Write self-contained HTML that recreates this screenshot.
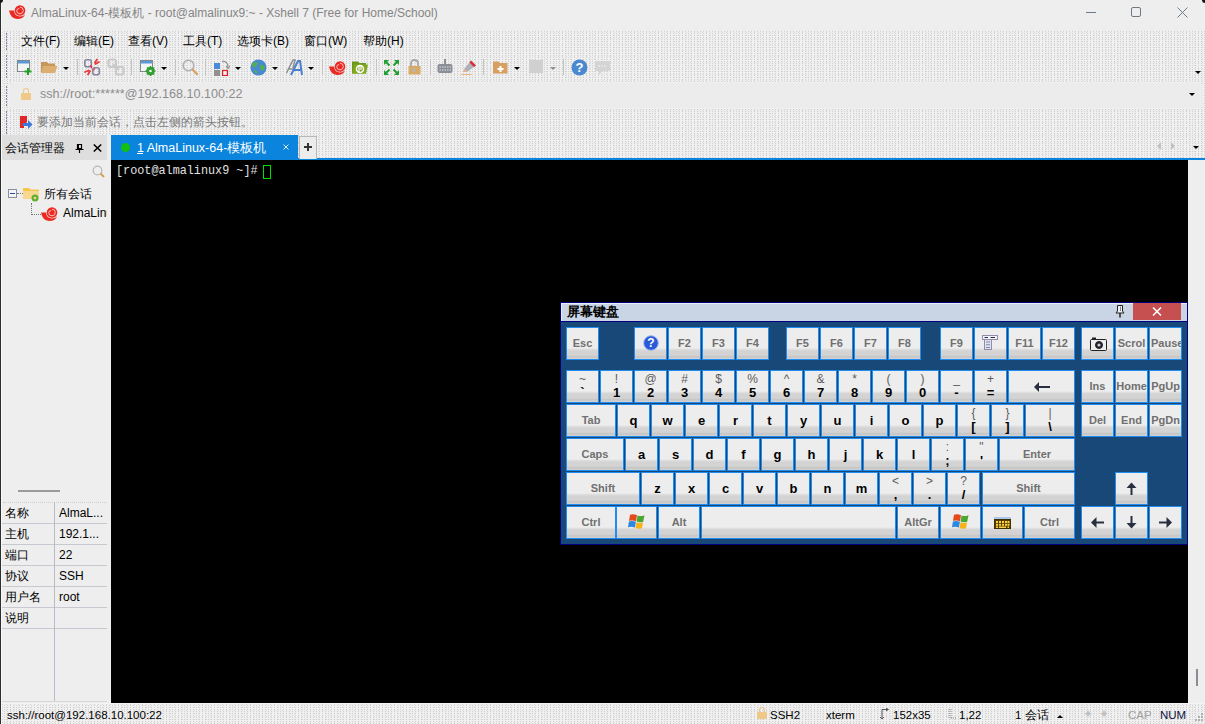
<!DOCTYPE html><html><head><meta charset="utf-8"><style>
*{margin:0;padding:0;box-sizing:border-box}
html,body{width:1205px;height:724px;overflow:hidden;background:#eeeeee;font-family:"Liberation Sans",sans-serif;font-size:12px;color:#000}
.a{position:absolute}
.t{position:absolute;white-space:nowrap;line-height:1}
.dith{background-color:#f0f0f0;background-image:conic-gradient(from 0deg at 1px 1px,transparent 75%,#d0d0d0 0),conic-gradient(from 0deg at 1px 1px,transparent 75%,#d6d6d6 0);background-size:3px 2px,4px 3px;background-position:0 0,1px 1px}
.sep{position:absolute;width:1px;background:#c4c4c4}
.dd{position:absolute;width:0;height:0;border-left:3px solid transparent;border-right:3px solid transparent;border-top:3px solid #000}
.key{position:absolute;border:1px solid #1e8cf0;background:linear-gradient(#ededed 0,#ededed 65%,#dedede 69%,#d3d3d3 75%,#d3d3d3 88%,#c6c6c6 91%,#cbcbcb 97%,#d6d6d6 100%)}
.kl{position:absolute;left:0;right:0;text-align:center;white-space:nowrap;line-height:1}
.fk{font-weight:bold;color:#707070;font-size:11px}
.lk{font-weight:bold;color:#000;font-size:13px}
.sy{color:#5c5c5c;font-size:12px}
</style></head><body>
<div class="a" style="left:0;top:0;width:1px;height:724px;background:#2a3030"></div>
<div class="a" style="left:0;top:0;width:3px;height:3px;background:#101818;border-bottom-right-radius:3px"></div>
<div class="a" style="left:1202px;top:0;width:3px;height:3px;background:#101818;border-bottom-left-radius:3px"></div>
<svg class="a" style="left:9px;top:4px" width="17" height="15" viewBox="0 0 17 15"><circle cx="11" cy="6.5" r="5.3" fill="#ec2a22"/><path d="M0 6.5 H5 Q5.6 12.4 11 12.4 Q15 12.4 16.2 9.5 Q15 15 8 15 Q1.5 14.5 0 6.5 Z" fill="#ec2a22"/><path d="M11 3.2 A3.3 3.3 0 1 1 7.7 6.5 A2.4 2.4 0 0 1 10.2 4.6" fill="none" stroke="#f6d0d0" stroke-width="0.9"/></svg>
<div class="t" style="left:31px;top:7px;color:#858585;font-size:12px">AlmaLinux-64-模板机 - root@almalinux9:~ - Xshell 7 (Free for Home/School)</div>
<div class="a" style="left:1086px;top:12px;width:10px;height:1px;background:#6d7b88"></div>
<div class="a" style="left:1131px;top:7px;width:10px;height:10px;border:1px solid #6d7b88;border-radius:2px"></div>
<svg class="a" style="left:1177px;top:7px" width="11" height="11"><path d="M0.5 0.5 L10.5 10.5 M10.5 0.5 L0.5 10.5" stroke="#6d7b88" stroke-width="1"/></svg>
<div class="a dith" style="left:1px;top:31px;width:1204px;height:104px"></div>
<div class="a" style="left:6px;top:33px;width:1px;height:2px;background:#8a80a0"></div>
<div class="a" style="left:6px;top:36px;width:1px;height:2px;background:#8a80a0"></div>
<div class="a" style="left:6px;top:39px;width:1px;height:2px;background:#8a80a0"></div>
<div class="a" style="left:6px;top:42px;width:1px;height:2px;background:#8a80a0"></div>
<div class="a" style="left:6px;top:45px;width:1px;height:2px;background:#8a80a0"></div>
<div class="a" style="left:6px;top:48px;width:1px;height:2px;background:#8a80a0"></div>
<div class="a" style="left:6px;top:55px;width:1px;height:2px;background:#8a80a0"></div>
<div class="a" style="left:6px;top:58px;width:1px;height:2px;background:#8a80a0"></div>
<div class="a" style="left:6px;top:61px;width:1px;height:2px;background:#8a80a0"></div>
<div class="a" style="left:6px;top:64px;width:1px;height:2px;background:#8a80a0"></div>
<div class="a" style="left:6px;top:67px;width:1px;height:2px;background:#8a80a0"></div>
<div class="a" style="left:6px;top:70px;width:1px;height:2px;background:#8a80a0"></div>
<div class="a" style="left:6px;top:73px;width:1px;height:2px;background:#8a80a0"></div>
<div class="a" style="left:6px;top:76px;width:1px;height:2px;background:#8a80a0"></div>
<div class="a" style="left:6px;top:86px;width:1px;height:2px;background:#8a80a0"></div>
<div class="a" style="left:6px;top:89px;width:1px;height:2px;background:#8a80a0"></div>
<div class="a" style="left:6px;top:92px;width:1px;height:2px;background:#8a80a0"></div>
<div class="a" style="left:6px;top:95px;width:1px;height:2px;background:#8a80a0"></div>
<div class="a" style="left:6px;top:98px;width:1px;height:2px;background:#8a80a0"></div>
<div class="a" style="left:6px;top:101px;width:1px;height:2px;background:#8a80a0"></div>
<div class="a" style="left:6px;top:104px;width:1px;height:2px;background:#8a80a0"></div>
<div class="a" style="left:6px;top:111px;width:1px;height:2px;background:#8a80a0"></div>
<div class="a" style="left:6px;top:114px;width:1px;height:2px;background:#8a80a0"></div>
<div class="a" style="left:6px;top:117px;width:1px;height:2px;background:#8a80a0"></div>
<div class="a" style="left:6px;top:120px;width:1px;height:2px;background:#8a80a0"></div>
<div class="a" style="left:6px;top:123px;width:1px;height:2px;background:#8a80a0"></div>
<div class="a" style="left:6px;top:126px;width:1px;height:2px;background:#8a80a0"></div>
<div class="a" style="left:6px;top:129px;width:1px;height:2px;background:#8a80a0"></div>
<div class="a" style="left:6px;top:132px;width:1px;height:2px;background:#8a80a0"></div>
<div class="t" style="left:21px;top:35px;font-size:12px;color:#000">文件(F)</div>
<div class="t" style="left:74px;top:35px;font-size:12px;color:#000">编辑(E)</div>
<div class="t" style="left:128px;top:35px;font-size:12px;color:#000">查看(V)</div>
<div class="t" style="left:183px;top:35px;font-size:12px;color:#000">工具(T)</div>
<div class="t" style="left:237px;top:35px;font-size:12px;color:#000">选项卡(B)</div>
<div class="t" style="left:304px;top:35px;font-size:12px;color:#000">窗口(W)</div>
<div class="t" style="left:363px;top:35px;font-size:12px;color:#000">帮助(H)</div>
<div class="a" style="left:10px;top:83px;width:1193px;height:25px;background:#ececec;border-radius:3px"></div>
<div class="a" style="left:21px;top:93px;width:10px;height:7px;background:#f0c888;border-radius:1px"></div>
<div class="a" style="left:23px;top:88px;width:6px;height:7px;border:1.5px solid #f0c888;border-bottom:none;border-radius:3px 3px 0 0"></div>
<div class="t" style="left:40px;top:88px;font-size:12.6px;color:#8c8c8c">ssh://root:******@192.168.10.100:22</div>
<div class="dd" style="left:1189px;top:93px"></div>
<div class="dd" style="left:1195px;top:71px"></div>
<svg class="a" style="left:20px;top:116px" width="13" height="13"><path d="M0 0 H7 V6 L4 9 V12 L0 12 Z" fill="#e02828"/><path d="M3 7 L8 7 L8 4 L12.5 8.5 L8 13 L8 10 L3 10 Z" fill="#3a7ad8"/></svg>
<div class="t" style="left:37px;top:116px;font-size:11.6px;color:#7a7a7a">要添加当前会话，点击左侧的箭头按钮。</div>
<div class="a dith" style="left:1px;top:135px;width:1204px;height:25px"></div>
<div class="a" style="left:1px;top:135px;width:106px;height:25px;background:#dedede"></div>
<div class="a" style="left:107px;top:135px;width:4px;height:568px;background:#eeeeee"></div>
<div class="t" style="left:5px;top:142px;font-size:12px;color:#000">会话管理器</div>
<svg class="a" style="left:75px;top:144px" width="9" height="9"><path d="M2.5 0.5 H6.5 V4.5 H2.5 Z M0.5 5.5 H8.5 M4.5 5.5 V9" stroke="#000" stroke-width="1.2" fill="none"/><path d="M3 1 H4 V4 H3Z" fill="#000"/></svg>
<svg class="a" style="left:93px;top:144px" width="9" height="8"><path d="M0.8 0.5 L8.2 7.5 M8.2 0.5 L0.8 7.5" stroke="#000" stroke-width="1.5"/></svg>
<div class="a" style="left:111px;top:135px;width:187px;height:25px;background:#0a84dc"></div>
<div class="a" style="left:111px;top:158px;width:1094px;height:2px;background:#0a84dc"></div>
<div class="a" style="left:121px;top:143px;width:9px;height:9px;border-radius:50%;background:#11c011"></div>
<div class="t" style="left:137px;top:142px;font-size:12.5px;color:#fff">1 AlmaLinux-64-模板机</div>
<div class="a" style="left:137px;top:153px;width:6px;height:1px;background:#fff"></div>
<svg class="a" style="left:283px;top:144px" width="6" height="6"><path d="M0.5 0.5 L5.5 5.5 M5.5 0.5 L0.5 5.5" stroke="#d8ecfa" stroke-width="1"/></svg>
<div class="a" style="left:299px;top:136px;width:18px;height:23px;background:#ececec;border:1px solid #b8b8b8;border-bottom:none"></div>
<div class="a" style="left:304px;top:146px;width:8px;height:2px;background:#333"></div>
<div class="a" style="left:307px;top:143px;width:2px;height:8px;background:#333"></div>
<div class="a" style="left:1157px;top:142px;width:0;height:0;border-top:4px solid transparent;border-bottom:4px solid transparent;border-right:4px solid #c0c0c0"></div>
<div class="a" style="left:1171px;top:142px;width:0;height:0;border-top:4px solid transparent;border-bottom:4px solid transparent;border-left:4px solid #c0c0c0"></div>
<div class="dd" style="left:1193px;top:146px"></div>
<div class="a" style="left:1px;top:160px;width:106px;height:543px;background:#eeeeee"></div>
<svg class="a" style="left:92px;top:165px" width="13" height="14"><circle cx="5.5" cy="5.5" r="4.3" fill="none" stroke="#b8b8b8" stroke-width="1.3"/><path d="M8.5 8.5 L12 12" stroke="#d8a050" stroke-width="2"/></svg>
<div class="a" style="left:8px;top:189px;width:9px;height:9px;border:1px solid #8a8ea0;background:#f4f4f4"></div>
<div class="a" style="left:10px;top:193px;width:5px;height:1px;background:#2050a0"></div>
<div class="a" style="left:17px;top:193px;width:6px;height:0;border-top:1px dotted #777"></div>
<svg class="a" style="left:23px;top:186px" width="17" height="16"><path d="M0 2 H6 L7.5 3.5 H16 V13 H0 Z" fill="#f6c64a"/><path d="M0 5 H16 V13 H0 Z" fill="#f8d890"/><circle cx="12" cy="12" r="3.5" fill="#60b030"/><circle cx="12" cy="12" r="1.3" fill="#f8d890"/></svg>
<div class="t" style="left:44px;top:188px;font-size:12px;color:#000">所有会话</div>
<div class="a" style="left:31px;top:203px;width:0;height:12px;border-left:1px dotted #777"></div>
<div class="a" style="left:31px;top:214px;width:10px;height:0;border-top:1px dotted #777"></div>
<svg class="a" style="left:41px;top:206px" width="17" height="15" viewBox="0 0 17 15"><circle cx="11" cy="6.5" r="5.3" fill="#ec2a22"/><path d="M0 6.5 H5 Q5.6 12.4 11 12.4 Q15 12.4 16.2 9.5 Q15 15 8 15 Q1.5 14.5 0 6.5 Z" fill="#ec2a22"/><path d="M11 3.2 A3.3 3.3 0 1 1 7.7 6.5 A2.4 2.4 0 0 1 10.2 4.6" fill="none" stroke="#f6d0d0" stroke-width="0.9"/></svg>
<div class="t" style="left:63px;top:207px;font-size:12px;color:#000;width:44px;overflow:hidden">AlmaLinux</div>
<div class="a" style="left:18px;top:490px;width:42px;height:2px;background:#9a9a9a"></div>
<div class="a" style="left:3px;top:502px;width:104px;height:0;border-top:1px dotted #cfcfcf"></div>
<div class="t" style="left:5px;top:507px;font-size:12px;color:#000">名称</div>
<div class="t" style="left:59px;top:507px;font-size:12px;color:#000">AlmaL...</div>
<div class="a" style="left:1px;top:523px;width:106px;height:1px;background:#c8c8d0"></div>
<div class="t" style="left:5px;top:528px;font-size:12px;color:#000">主机</div>
<div class="t" style="left:59px;top:528px;font-size:12px;color:#000">192.1...</div>
<div class="a" style="left:1px;top:544px;width:106px;height:1px;background:#c8c8d0"></div>
<div class="t" style="left:5px;top:549px;font-size:12px;color:#000">端口</div>
<div class="t" style="left:59px;top:549px;font-size:12px;color:#000">22</div>
<div class="a" style="left:1px;top:565px;width:106px;height:1px;background:#c8c8d0"></div>
<div class="t" style="left:5px;top:570px;font-size:12px;color:#000">协议</div>
<div class="t" style="left:59px;top:570px;font-size:12px;color:#000">SSH</div>
<div class="a" style="left:1px;top:586px;width:106px;height:1px;background:#c8c8d0"></div>
<div class="t" style="left:5px;top:591px;font-size:12px;color:#000">用户名</div>
<div class="t" style="left:59px;top:591px;font-size:12px;color:#000">root</div>
<div class="a" style="left:1px;top:607px;width:106px;height:1px;background:#c8c8d0"></div>
<div class="t" style="left:5px;top:612px;font-size:12px;color:#000">说明</div>
<div class="t" style="left:59px;top:612px;font-size:12px;color:#000"></div>
<div class="a" style="left:1px;top:628px;width:106px;height:1px;background:#c8c8d0"></div>
<div class="a" style="left:54px;top:502px;width:1px;height:200px;background:#b8bcc8"></div>
<div class="a" style="left:1px;top:701px;width:106px;height:1px;background:#d8d8d8"></div>
<div class="a" style="left:111px;top:160px;width:1077px;height:543px;background:#000"></div>
<div class="t" style="left:116px;top:165px;font-family:'Liberation Mono',monospace;font-size:11.8px;color:#e0e0e0;transform:scaleY(1.12);transform-origin:0 0">[root@almalinux9 ~]#</div>
<div class="a" style="left:263px;top:165px;width:8px;height:14px;border:1px solid #00e000"></div>
<div class="a" style="left:1188px;top:160px;width:17px;height:543px;background:#eeeeee"></div>
<div class="a" style="left:1196px;top:669px;width:2px;height:17px;background:#8c8c94"></div>
<div class="a dith" style="left:1px;top:703px;width:1204px;height:21px"></div>
<div class="a" style="left:1px;top:703px;width:1204px;height:1px;background:#f4f4f4"></div>
<div class="t" style="left:7px;top:710px;font-size:11.5px;color:#000">ssh://root@192.168.10.100:22</div>
<div class="a" style="left:757px;top:712px;width:10px;height:7px;background:#f0c888;border-radius:1px"></div>
<div class="a" style="left:759px;top:707px;width:6px;height:7px;border:1.5px solid #f0c888;border-bottom:none;border-radius:3px 3px 0 0"></div>
<div class="t" style="left:770px;top:710px;font-size:11.5px">SSH2</div>
<div class="t" style="left:826px;top:710px;font-size:11.5px">xterm</div>
<svg class="a" style="left:880px;top:708px" width="10" height="11"><path d="M2 11 V1.5 H8 M6 0 L8.5 1.5 L6 3 M0 9 L2 11 L4 9" stroke="#555" stroke-width="1" fill="none"/></svg>
<div class="t" style="left:893px;top:710px;font-size:11.5px">152x35</div>
<svg class="a" style="left:948px;top:709px" width="8" height="10"><path d="M1 0 V9 M3 0 V9 M3 9 H8" stroke="#888" stroke-width="1" stroke-dasharray="1 1" fill="none"/></svg>
<div class="t" style="left:959px;top:710px;font-size:11.5px">1,22</div>
<div class="t" style="left:1015px;top:710px;font-size:11.5px">1 会话</div>
<div class="a" style="left:1057px;top:715px;width:0;height:0;border-left:3px solid transparent;border-right:3px solid transparent;border-bottom:3px solid #000"></div>
<div class="t" style="left:1083px;top:708px;font-size:12px;color:#c0c0c0">✦</div>
<div class="t" style="left:1099px;top:708px;font-size:12px;color:#c0c0c0">✦</div>
<div class="t" style="left:1128px;top:710px;font-size:11.5px;color:#a0a0a0">CAP</div>
<div class="t" style="left:1160px;top:710px;font-size:11.5px;color:#101040">NUM</div>
<div class="a" style="left:560px;top:302px;width:628px;height:243px;background:#000080"></div>
<div class="a" style="left:561px;top:303px;width:626px;height:18px;background:#c9d5e5;border-top:1px solid #e8eef6;border-left:1px solid #e8eef6"></div>
<div class="a" style="left:561px;top:322px;width:626px;height:222px;background:#184878"></div>
<div class="t" style="left:567px;top:305px;font-size:13px;font-weight:bold;color:#000">屏幕键盘</div>
<div class="a" style="left:1133px;top:303px;width:48px;height:17px;background:#c65050"></div>
<svg class="a" style="left:1152px;top:307px" width="10" height="9"><path d="M1 0.5 L9 8.5 M9 0.5 L1 8.5" stroke="#fff" stroke-width="1.5"/></svg>
<svg class="a" style="left:1115px;top:305px" width="10" height="13"><path d="M3 0.5 H7.5 V6 L9 8 H1 L2.5 6 V0.5 Z" stroke="#222" stroke-width="1" fill="#f0f0f0"/><path d="M5 8 V12.5" stroke="#222" stroke-width="1.5"/><path d="M5.5 1.5 V6" stroke="#888" stroke-width="1"/></svg>
<div class="key" style="left:566px;top:327px;width:33px;height:33px"><div class="kl fk" style="top:10px">Esc</div></div>
<div class="key" style="left:634px;top:327px;width:33px;height:33px"><svg class="a" style="left:8px;top:7px" width="16" height="16"><circle cx="8" cy="8" r="7.3" fill="#2a5ad8" stroke="#9ab8f0" stroke-width="1"/><text x="8" y="12.3" text-anchor="middle" font-family="Liberation Sans" font-weight="bold" font-size="12" fill="#fff">?</text></svg></div>
<div class="key" style="left:668px;top:327px;width:33px;height:33px"><div class="kl fk" style="top:10px">F2</div></div>
<div class="key" style="left:702px;top:327px;width:33px;height:33px"><div class="kl fk" style="top:10px">F3</div></div>
<div class="key" style="left:736px;top:327px;width:33px;height:33px"><div class="kl fk" style="top:10px">F4</div></div>
<div class="key" style="left:786px;top:327px;width:33px;height:33px"><div class="kl fk" style="top:10px">F5</div></div>
<div class="key" style="left:820px;top:327px;width:33px;height:33px"><div class="kl fk" style="top:10px">F6</div></div>
<div class="key" style="left:854px;top:327px;width:33px;height:33px"><div class="kl fk" style="top:10px">F7</div></div>
<div class="key" style="left:888px;top:327px;width:33px;height:33px"><div class="kl fk" style="top:10px">F8</div></div>
<div class="key" style="left:940px;top:327px;width:33px;height:33px"><div class="kl fk" style="top:10px">F9</div></div>
<div class="key" style="left:974px;top:327px;width:33px;height:33px"><svg class="a" style="left:7px;top:7px" width="16" height="15"><rect x="0.5" y="0.5" width="15" height="4" fill="#f4f4fa" stroke="#9888a8"/><path d="M2.5 2.5 H6 M8.5 2.5 H13" stroke="#203050" stroke-width="1.2"/><rect x="2.5" y="4.5" width="7" height="10" fill="#dce4f2" stroke="#9888a8"/><path d="M4.5 7 H8 M4.5 9.8 H8 M4.5 12.5 H8" stroke="#203050" stroke-width="1.1" stroke-dasharray="1 1"/></svg></div>
<div class="key" style="left:1008px;top:327px;width:33px;height:33px"><div class="kl fk" style="top:10px">F11</div></div>
<div class="key" style="left:1042px;top:327px;width:33px;height:33px"><div class="kl fk" style="top:10px">F12</div></div>
<div class="key" style="left:1081px;top:327px;width:33px;height:33px"><svg class="a" style="left:8px;top:9px" width="17" height="14"><rect x="0.5" y="2.5" width="16" height="11" rx="1" fill="#eee" stroke="#222"/><rect x="2" y="0.5" width="4" height="2" fill="#222"/><circle cx="9" cy="8" r="3.5" fill="#223" stroke="#222"/><circle cx="9" cy="8" r="1.6" fill="#ccd"/></svg></div>
<div class="key" style="left:1115px;top:327px;width:33px;height:33px"><div class="kl fk" style="top:10px">Scrol</div></div>
<div class="key" style="left:1149px;top:327px;width:33px;height:33px"><div class="kl fk" style="top:10px;text-align:left;left:1px;overflow:hidden">Pause</div></div>
<div class="key" style="left:566px;top:370px;width:33px;height:33px"><div class="kl sy" style="top:1.5px">~</div><div class="kl lk" style="top:15px">`</div></div>
<div class="key" style="left:600px;top:370px;width:33px;height:33px"><div class="kl sy" style="top:1.5px">!</div><div class="kl lk" style="top:15px">1</div></div>
<div class="key" style="left:634px;top:370px;width:33px;height:33px"><div class="kl sy" style="top:1.5px">@</div><div class="kl lk" style="top:15px">2</div></div>
<div class="key" style="left:668px;top:370px;width:33px;height:33px"><div class="kl sy" style="top:1.5px">#</div><div class="kl lk" style="top:15px">3</div></div>
<div class="key" style="left:702px;top:370px;width:33px;height:33px"><div class="kl sy" style="top:1.5px">$</div><div class="kl lk" style="top:15px">4</div></div>
<div class="key" style="left:736px;top:370px;width:33px;height:33px"><div class="kl sy" style="top:1.5px">%</div><div class="kl lk" style="top:15px">5</div></div>
<div class="key" style="left:770px;top:370px;width:33px;height:33px"><div class="kl sy" style="top:1.5px">^</div><div class="kl lk" style="top:15px">6</div></div>
<div class="key" style="left:804px;top:370px;width:33px;height:33px"><div class="kl sy" style="top:1.5px">&amp;</div><div class="kl lk" style="top:15px">7</div></div>
<div class="key" style="left:838px;top:370px;width:33px;height:33px"><div class="kl sy" style="top:1.5px">*</div><div class="kl lk" style="top:15px">8</div></div>
<div class="key" style="left:872px;top:370px;width:33px;height:33px"><div class="kl sy" style="top:1.5px">(</div><div class="kl lk" style="top:15px">9</div></div>
<div class="key" style="left:906px;top:370px;width:33px;height:33px"><div class="kl sy" style="top:1.5px">)</div><div class="kl lk" style="top:15px">0</div></div>
<div class="key" style="left:940px;top:370px;width:33px;height:33px"><div class="kl sy" style="top:1.5px">_</div><div class="kl lk" style="top:15px">-</div></div>
<div class="key" style="left:974px;top:370px;width:33px;height:33px"><div class="kl sy" style="top:1.5px">+</div><div class="kl lk" style="top:15px">=</div></div>
<div class="key" style="left:1008px;top:370px;width:67px;height:33px"><svg class="a" style="left:25px;top:11px" width="17" height="10"><path d="M4 5 H16" stroke="#283040" stroke-width="2"/><path d="M0 5 L5 0 V10 Z" fill="#283040"/></svg></div>
<div class="key" style="left:1081px;top:370px;width:33px;height:33px"><div class="kl fk" style="top:10px">Ins</div></div>
<div class="key" style="left:1115px;top:370px;width:33px;height:33px"><div class="kl fk" style="top:10px">Home</div></div>
<div class="key" style="left:1149px;top:370px;width:33px;height:33px"><div class="kl fk" style="top:10px">PgUp</div></div>
<div class="key" style="left:566px;top:404px;width:50px;height:33px"><div class="kl fk" style="top:10px">Tab</div></div>
<div class="key" style="left:617px;top:404px;width:33px;height:33px"><div class="kl lk" style="top:9px">q</div></div>
<div class="key" style="left:651px;top:404px;width:33px;height:33px"><div class="kl lk" style="top:9px">w</div></div>
<div class="key" style="left:685px;top:404px;width:33px;height:33px"><div class="kl lk" style="top:9px">e</div></div>
<div class="key" style="left:719px;top:404px;width:33px;height:33px"><div class="kl lk" style="top:9px">r</div></div>
<div class="key" style="left:753px;top:404px;width:33px;height:33px"><div class="kl lk" style="top:9px">t</div></div>
<div class="key" style="left:787px;top:404px;width:33px;height:33px"><div class="kl lk" style="top:9px">y</div></div>
<div class="key" style="left:821px;top:404px;width:33px;height:33px"><div class="kl lk" style="top:9px">u</div></div>
<div class="key" style="left:855px;top:404px;width:33px;height:33px"><div class="kl lk" style="top:9px">i</div></div>
<div class="key" style="left:889px;top:404px;width:33px;height:33px"><div class="kl lk" style="top:9px">o</div></div>
<div class="key" style="left:923px;top:404px;width:33px;height:33px"><div class="kl lk" style="top:9px">p</div></div>
<div class="key" style="left:957px;top:404px;width:33px;height:33px"><div class="kl sy" style="top:1.5px">{</div><div class="kl lk" style="top:15px">[</div></div>
<div class="key" style="left:991px;top:404px;width:33px;height:33px"><div class="kl sy" style="top:1.5px">}</div><div class="kl lk" style="top:15px">]</div></div>
<div class="key" style="left:1025px;top:404px;width:50px;height:33px"><div class="kl sy" style="top:1.5px">|</div><div class="kl lk" style="top:15px">\</div></div>
<div class="key" style="left:1081px;top:404px;width:33px;height:33px"><div class="kl fk" style="top:10px">Del</div></div>
<div class="key" style="left:1115px;top:404px;width:33px;height:33px"><div class="kl fk" style="top:10px">End</div></div>
<div class="key" style="left:1149px;top:404px;width:33px;height:33px"><div class="kl fk" style="top:10px">PgDn</div></div>
<div class="key" style="left:566px;top:438px;width:58px;height:33px"><div class="kl fk" style="top:10px">Caps</div></div>
<div class="key" style="left:625px;top:438px;width:33px;height:33px"><div class="kl lk" style="top:9px">a</div></div>
<div class="key" style="left:659px;top:438px;width:33px;height:33px"><div class="kl lk" style="top:9px">s</div></div>
<div class="key" style="left:693px;top:438px;width:33px;height:33px"><div class="kl lk" style="top:9px">d</div></div>
<div class="key" style="left:727px;top:438px;width:33px;height:33px"><div class="kl lk" style="top:9px">f</div></div>
<div class="key" style="left:761px;top:438px;width:33px;height:33px"><div class="kl lk" style="top:9px">g</div></div>
<div class="key" style="left:795px;top:438px;width:33px;height:33px"><div class="kl lk" style="top:9px">h</div></div>
<div class="key" style="left:829px;top:438px;width:33px;height:33px"><div class="kl lk" style="top:9px">j</div></div>
<div class="key" style="left:863px;top:438px;width:33px;height:33px"><div class="kl lk" style="top:9px">k</div></div>
<div class="key" style="left:897px;top:438px;width:33px;height:33px"><div class="kl lk" style="top:9px">l</div></div>
<div class="key" style="left:931px;top:438px;width:33px;height:33px"><div class="kl sy" style="top:1.5px">:</div><div class="kl lk" style="top:15px">;</div></div>
<div class="key" style="left:965px;top:438px;width:33px;height:33px"><div class="kl sy" style="top:1.5px">"</div><div class="kl lk" style="top:15px">'</div></div>
<div class="key" style="left:999px;top:438px;width:76px;height:33px"><div class="kl fk" style="top:10px">Enter</div></div>
<div class="key" style="left:566px;top:472px;width:74px;height:33px"><div class="kl fk" style="top:10px">Shift</div></div>
<div class="key" style="left:641px;top:472px;width:33px;height:33px"><div class="kl lk" style="top:9px">z</div></div>
<div class="key" style="left:675px;top:472px;width:33px;height:33px"><div class="kl lk" style="top:9px">x</div></div>
<div class="key" style="left:709px;top:472px;width:33px;height:33px"><div class="kl lk" style="top:9px">c</div></div>
<div class="key" style="left:743px;top:472px;width:33px;height:33px"><div class="kl lk" style="top:9px">v</div></div>
<div class="key" style="left:777px;top:472px;width:33px;height:33px"><div class="kl lk" style="top:9px">b</div></div>
<div class="key" style="left:811px;top:472px;width:33px;height:33px"><div class="kl lk" style="top:9px">n</div></div>
<div class="key" style="left:845px;top:472px;width:33px;height:33px"><div class="kl lk" style="top:9px">m</div></div>
<div class="key" style="left:879px;top:472px;width:33px;height:33px"><div class="kl sy" style="top:1.5px">&lt;</div><div class="kl lk" style="top:15px">,</div></div>
<div class="key" style="left:913px;top:472px;width:33px;height:33px"><div class="kl sy" style="top:1.5px">&gt;</div><div class="kl lk" style="top:15px">.</div></div>
<div class="key" style="left:947px;top:472px;width:33px;height:33px"><div class="kl sy" style="top:1.5px">?</div><div class="kl lk" style="top:15px">/</div></div>
<div class="key" style="left:982px;top:472px;width:93px;height:33px"><div class="kl fk" style="top:10px">Shift</div></div>
<div class="key" style="left:1115px;top:472px;width:33px;height:33px"><svg class="a" style="left:10px;top:9px" width="11" height="13"><path d="M5.5 5 V13" stroke="#283040" stroke-width="2"/><path d="M0.5 6 L5.5 0.5 L10.5 6 Z" fill="#283040"/></svg></div>
<div class="key" style="left:566px;top:506px;width:50px;height:33px"><div class="kl fk" style="top:10px">Ctrl</div></div>
<div class="key" style="left:616px;top:506px;width:41px;height:33px"><svg class="a" style="left:11px;top:7px" width="17" height="15"><path d="M2 0.8 Q5.5 -0.3 9 1.2 L8 7.2 Q4.8 5.8 1 6.8 Z" fill="#e44a1c"/><path d="M9.6 1.6 Q12.8 2.8 16.5 1.2 L15.2 7.8 Q11.8 9 8.6 7.6 Z" fill="#4aa830"/><path d="M0.9 7.4 Q4.5 6.4 7.9 7.8 L6.9 13.6 Q3.6 12.2 0 13.2 Z" fill="#2a88e0"/><path d="M8.5 8.3 Q11.7 9.6 15.1 8.4 L14 14.2 Q10.6 15.4 7.5 14 Z" fill="#f6b418"/></svg></div>
<div class="key" style="left:658px;top:506px;width:42px;height:33px"><div class="kl fk" style="top:10px">Alt</div></div>
<div class="key" style="left:701px;top:506px;width:195px;height:33px"></div>
<div class="key" style="left:897px;top:506px;width:42px;height:33px"><div class="kl fk" style="top:10px">AltGr</div></div>
<div class="key" style="left:940px;top:506px;width:41px;height:33px"><svg class="a" style="left:11px;top:7px" width="17" height="15"><path d="M2 0.8 Q5.5 -0.3 9 1.2 L8 7.2 Q4.8 5.8 1 6.8 Z" fill="#e44a1c"/><path d="M9.6 1.6 Q12.8 2.8 16.5 1.2 L15.2 7.8 Q11.8 9 8.6 7.6 Z" fill="#4aa830"/><path d="M0.9 7.4 Q4.5 6.4 7.9 7.8 L6.9 13.6 Q3.6 12.2 0 13.2 Z" fill="#2a88e0"/><path d="M8.5 8.3 Q11.7 9.6 15.1 8.4 L14 14.2 Q10.6 15.4 7.5 14 Z" fill="#f6b418"/></svg></div>
<div class="key" style="left:982px;top:506px;width:41px;height:33px"><svg class="a" style="left:11px;top:10px" width="17" height="12"><rect x="0" y="0" width="17" height="2" fill="#a8c8f0"/><rect x="0.5" y="2.5" width="16" height="9" fill="#5a4000" stroke="#403000"/><rect x="2" y="4" width="2" height="2" fill="#f8d040"/><rect x="5" y="4" width="2" height="2" fill="#f8d040"/><rect x="8" y="4" width="2" height="2" fill="#f8d040"/><rect x="11" y="4" width="2" height="2" fill="#f8d040"/><rect x="13.5" y="4" width="2" height="2" fill="#f8d040"/><rect x="2" y="6.8" width="2" height="2" fill="#f8d040"/><rect x="5" y="6.8" width="2" height="2" fill="#f8d040"/><rect x="8" y="6.8" width="2" height="2" fill="#f8d040"/><rect x="11" y="6.8" width="2" height="2" fill="#f8d040"/><rect x="13.5" y="6.8" width="2" height="2" fill="#f8d040"/><rect x="2" y="9.5" width="2" height="1.5" fill="#f8d040"/><rect x="5" y="9.5" width="7" height="1.5" fill="#f8d040"/><rect x="13.5" y="9.5" width="1.5" height="1.5" fill="#f8d040"/></svg></div>
<div class="key" style="left:1024px;top:506px;width:51px;height:33px"><div class="kl fk" style="top:10px">Ctrl</div></div>
<div class="key" style="left:1081px;top:506px;width:33px;height:33px"><svg class="a" style="left:9px;top:10px" width="13" height="11"><path d="M4 5.5 H13" stroke="#283040" stroke-width="2"/><path d="M0 5.5 L5.5 0 V11 Z" fill="#283040"/></svg></div>
<div class="key" style="left:1115px;top:506px;width:33px;height:33px"><svg class="a" style="left:10px;top:9px" width="11" height="13"><path d="M5.5 0 V8" stroke="#283040" stroke-width="2"/><path d="M0.5 7 L5.5 12.5 L10.5 7 Z" fill="#283040"/></svg></div>
<div class="key" style="left:1149px;top:506px;width:33px;height:33px"><svg class="a" style="left:9px;top:10px" width="13" height="11"><path d="M0 5.5 H9" stroke="#283040" stroke-width="2"/><path d="M13 5.5 L7.5 0 V11 Z" fill="#283040"/></svg></div>
<svg class="a" style="left:17px;top:60px" width="16" height="15"><rect x="0.5" y="0.5" width="12" height="11" fill="#f4f4f4" stroke="#808890"/><rect x="1" y="1" width="11" height="2.5" fill="#5a98d8"/><path d="M11 8 V15 M7.5 11.5 H14.5" stroke="#20a020" stroke-width="2"/></svg>
<svg class="a" style="left:41px;top:61px" width="17" height="13"><path d="M0 1 H6 L7.5 2.5 H14 V12 H0 Z" fill="#c8965a"/><path d="M2 5 H16.5 L14 12 H0 Z" fill="#dcae70"/></svg>
<div class="dd" style="left:63px;top:67px"></div>
<div class="sep" style="left:77px;top:59px;height:16px"></div>
<svg class="a" style="left:83px;top:58px" width="18" height="18"><rect x="1.8" y="1.8" width="6.5" height="7" rx="2" fill="none" stroke="#8884a0" stroke-width="1.6"/><rect x="9.8" y="9.8" width="6.5" height="7" rx="2" fill="none" stroke="#8884a0" stroke-width="1.6"/><path d="M6.5 7 L9.5 8 L8.5 11 Z M10 11.5 L12.5 9.5 L11 13 Z" fill="#e83030"/><path d="M12 4.5 L14 1.5 M12.5 6 L16 4 M2 14 L5.5 12.5 M5 16.5 L7 13" stroke="#e83a3a" stroke-width="1.8" stroke-linecap="round"/></svg>
<svg class="a" style="left:107px;top:58px" width="18" height="18"><rect x="1.5" y="1.5" width="7.5" height="7.5" rx="2" fill="none" stroke="#cacaca" stroke-width="2.2"/><rect x="9" y="9" width="7.5" height="7.5" rx="2" fill="none" stroke="#cacaca" stroke-width="2.2"/><path d="M6 6 L12 12" stroke="#cacaca" stroke-width="2.2"/></svg>
<div class="sep" style="left:131px;top:59px;height:16px"></div>
<svg class="a" style="left:140px;top:60px" width="16" height="16"><rect x="0.5" y="0.5" width="12" height="11" fill="#f4f4f4" stroke="#808890"/><rect x="1" y="1" width="11" height="2.5" fill="#5a98d8"/><circle cx="10.5" cy="11" r="3.2" fill="none" stroke="#30a030" stroke-width="2.2"/><path d="M10.5 6 V16 M5.5 11 H15.5 M7 7.5 L14 14.5 M14 7.5 L7 14.5" stroke="#30a030" stroke-width="1.5"/><circle cx="10.5" cy="11" r="1.3" fill="#f4f4f4"/></svg>
<div class="dd" style="left:161px;top:67px"></div>
<div class="sep" style="left:175px;top:59px;height:16px"></div>
<svg class="a" style="left:182px;top:59px" width="16" height="17"><circle cx="6.5" cy="6.5" r="5.3" fill="none" stroke="#b0b0b4" stroke-width="1.6"/><path d="M10.5 10.5 L15 15" stroke="#d8a060" stroke-width="2.2" stroke-linecap="round"/></svg>
<div class="sep" style="left:205px;top:59px;height:16px"></div>
<svg class="a" style="left:214px;top:60px" width="16" height="16"><rect x="0" y="3" width="6" height="6" fill="#4a8ad8"/><rect x="0" y="10" width="6" height="6" fill="#909090"/><rect x="8.5" y="10.5" width="5" height="5" fill="none" stroke="#e02020" stroke-width="1.2"/><path d="M8 1.5 Q14 1 14 7" fill="none" stroke="#909090" stroke-width="1.3"/><path d="M12 6 L14 8.5 L16 6" fill="none" stroke="#909090" stroke-width="1.2"/></svg>
<div class="dd" style="left:235px;top:67px"></div>
<svg class="a" style="left:250px;top:59px" width="17" height="17"><circle cx="8.5" cy="8.5" r="8" fill="#4a88d0"/><path d="M3 4 Q6 2 8 4 Q7 7 5 8 Q3 9 2 6 Z M10 6 Q13 5 15 8 Q14 11 12 12 Q10 10 10 8 Z M5 11 Q8 12 7 15 Q5 14 4 12 Z" fill="#50b050"/></svg>
<div class="dd" style="left:272px;top:67px"></div>
<svg class="a" style="left:286px;top:59px" width="17" height="17"><path d="M0.5 14 L7 1 L9 1 L7 9 M2.5 10 H7" stroke="#909090" stroke-width="1.5" fill="none"/><path d="M5 16 L12 2 L14 2 L16 16 M8 11 H15" stroke="#4a80d0" stroke-width="2" fill="none"/></svg>
<div class="dd" style="left:308px;top:67px"></div>
<div class="sep" style="left:322px;top:59px;height:16px"></div>
<svg class="a" style="left:329px;top:60px" width="17" height="15" viewBox="0 0 17 15"><circle cx="11" cy="6.5" r="5.3" fill="#ec2a22"/><path d="M0 6.5 H5 Q5.6 12.4 11 12.4 Q15 12.4 16.2 9.5 Q15 15 8 15 Q1.5 14.5 0 6.5 Z" fill="#ec2a22"/><path d="M11 3.2 A3.3 3.3 0 1 1 7.7 6.5 A2.4 2.4 0 0 1 10.2 4.6" fill="none" stroke="#f6d0d0" stroke-width="0.9"/></svg>
<svg class="a" style="left:352px;top:61px" width="16" height="13"><path d="M0 0.5 H6 L7.5 2 H14 V12.5 H0 Z" fill="#6a9a1a"/><path d="M2 3.5 H16 L14 12.5 H0 Z" fill="#80a820"/><circle cx="8" cy="8" r="3.5" fill="none" stroke="#fff" stroke-width="1.5"/><path d="M7 5 V11 M9 4 V9" stroke="#fff" stroke-width="1.2"/></svg>
<div class="sep" style="left:376px;top:59px;height:16px"></div>
<svg class="a" style="left:384px;top:60px" width="15" height="15"><path d="M1 1 L5.5 5.5 M14 1 L9.5 5.5 M1 14 L5.5 9.5 M14 14 L9.5 9.5" stroke="#20a030" stroke-width="2"/><path d="M0 0 H5 L0 5 Z M15 0 V5 L10 0 Z M0 15 V10 L5 15 Z M15 15 H10 L15 10 Z" fill="#20a030"/></svg>
<svg class="a" style="left:408px;top:59px" width="13" height="16"><path d="M3 7 V4.5 Q3 1 6.5 1 Q10 1 10 4.5 V7" fill="none" stroke="#a8a8a8" stroke-width="1.8"/><rect x="0.5" y="7" width="12" height="8.5" fill="#d8aa68"/><rect x="5" y="9" width="2" height="4" fill="#b0b8c8"/></svg>
<div class="sep" style="left:430px;top:59px;height:16px"></div>
<svg class="a" style="left:437px;top:59px" width="16" height="15"><path d="M8 0 V5" stroke="#555" stroke-width="1.2"/><rect x="0.5" y="5" width="15" height="9" rx="2" fill="#8a8e96"/><path d="M2.5 8 H14 M2.5 11 H14" stroke="#e0e0e0" stroke-width="1" stroke-dasharray="1.5 1"/></svg>
<svg class="a" style="left:460px;top:60px" width="17" height="15"><path d="M11 0.5 L16 5.5 L7 12 L4 9 Z" fill="#b0b0b8"/><path d="M11 0.5 L16 5.5 L14 7 L9.5 2.5 Z" fill="#e02838"/><path d="M4 9 L7 12 L3 12 Z" fill="#e8b080"/><path d="M1 14.5 H12" stroke="#f0b880" stroke-width="1"/></svg>
<div class="sep" style="left:483px;top:59px;height:16px"></div>
<svg class="a" style="left:493px;top:61px" width="15" height="13"><path d="M0 0.5 H5.5 L7 2 H14.5 V12.5 H0 Z" fill="#d8a060"/><path d="M7.5 5 V11 M4.5 8 H10.5" stroke="#fff" stroke-width="2"/></svg>
<div class="dd" style="left:514px;top:67px"></div>
<div class="a" style="left:529px;top:60px;width:14px;height:13px;background:#d0d0d0"></div>
<div class="a" style="left:550px;top:67px;width:0;height:0;border-left:3px solid transparent;border-right:3px solid transparent;border-top:3px solid #909088"></div>
<div class="sep" style="left:563px;top:59px;height:16px"></div>
<svg class="a" style="left:571px;top:59px" width="17" height="17"><circle cx="8.5" cy="8.5" r="8" fill="#4a88d0"/><text x="8.5" y="13.3" text-anchor="middle" font-family="Liberation Sans" font-weight="bold" font-size="13" fill="#fff">?</text></svg>
<svg class="a" style="left:594px;top:60px" width="17" height="16"><path d="M1 1 H16 V11 H8 L5 15 V11 H1 Z" fill="#d4d4d4"/><path d="M4 6 H13" stroke="#f0f0f0" stroke-dasharray="2 1"/></svg>
<div class="a" style="left:1201px;top:713px;width:2px;height:2px;background:#b0b0b0"></div>
<div class="a" style="left:1198px;top:716px;width:2px;height:2px;background:#b0b0b0"></div>
<div class="a" style="left:1201px;top:716px;width:2px;height:2px;background:#b0b0b0"></div>
<div class="a" style="left:1195px;top:719px;width:2px;height:2px;background:#b0b0b0"></div>
<div class="a" style="left:1198px;top:719px;width:2px;height:2px;background:#b0b0b0"></div>
<div class="a" style="left:1201px;top:719px;width:2px;height:2px;background:#b0b0b0"></div>
<div class="a" style="left:1px;top:3px;width:1px;height:721px;background:#f8f8f8"></div>
</body></html>
